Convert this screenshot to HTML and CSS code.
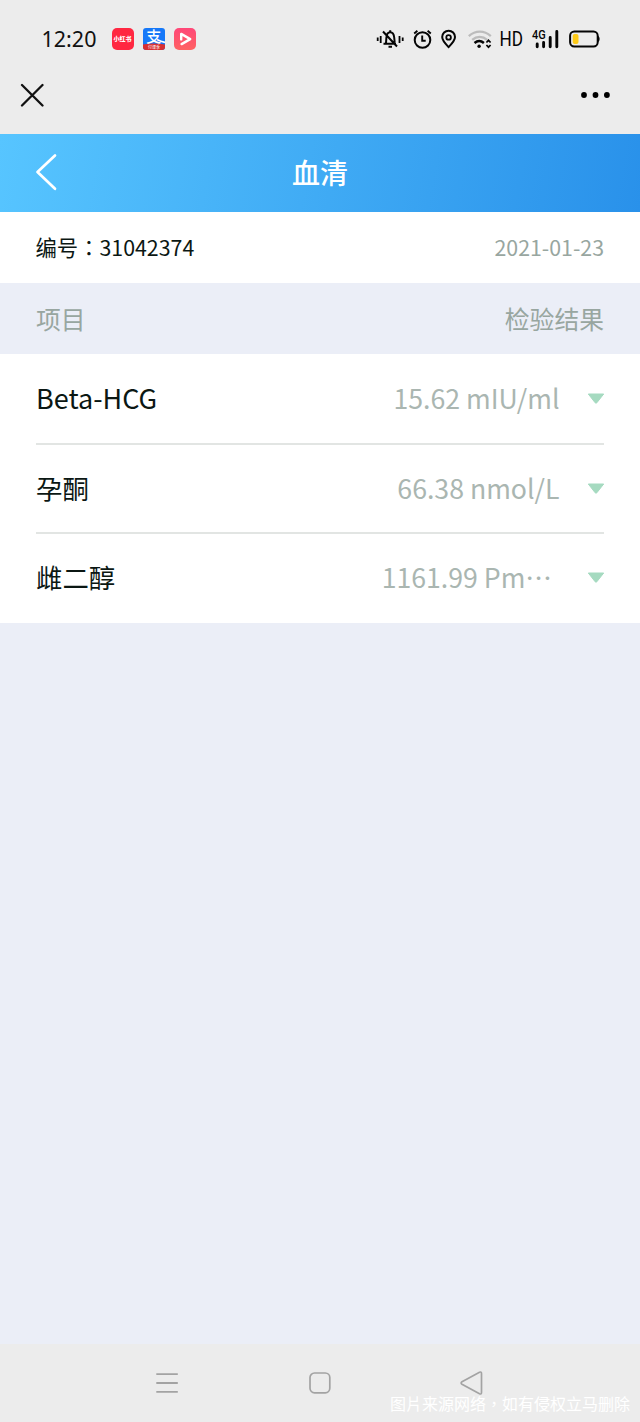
FILE: index.html
```
<!DOCTYPE html>
<html lang="zh-CN">
<head>
<meta charset="utf-8">
<title>血清</title>
<link rel="stylesheet" href="styles.css">
</head>
<body>
<div class="screen">
  <div class="status">
    <span class="clock">12:20</span>
    <div class="apps">
      <span class="app red"><span class="red-label">小红书</span></span>
      <span class="app pay"><svg width="22" height="22" viewBox="0 0 22 22"><path d="M14 11.5q4 2 8 3" stroke="#fff" stroke-width="1.8"/><path d="M0 16.5q11-2 22 0V22H0z" fill="#d82f32"/><text class="pay-label" x="10.8" y="14.4" text-anchor="middle">支</text><text class="pay-strip" x="11" y="20.8" text-anchor="middle">付课季</text></svg></span>
      <span class="app pink"><svg width="22" height="22" viewBox="0 0 22 22"><path d="M7.2 11.4V5.9l9 5.2-8.6 5" fill="none" stroke="#fff" stroke-width="2.4" stroke-linejoin="round" stroke-linecap="round"/></svg></span>
    </div>
    <svg class="signals" width="226" height="26" viewBox="376 26 226 26" fill="none" stroke="#050505">
      <path d="M377.7 37.5v3.5M380.7 36v7M399.5 36v7M402.7 37.5v3.5" stroke-width="1.8"/>
      <path d="M383.5 43.8h12.5M386 42.8l.4-5.3c.3-3.3 2-5.2 3.8-5.2s3.7 1.9 4 5.2l.5 5M383 31.5l14 15" stroke-width="2"/>
      <path d="M388.5 46.7h3.5M390.2 30.3v2" stroke-width="2"/>
      <circle cx="422.5" cy="40" r="7.8" stroke-width="2"/>
      <path d="M422.2 35.5v5.2h3.5M414.2 33.4l3.2-2.6M430.8 33.4l-3.2-2.6" stroke-width="1.9"/>
      <path d="M448.6 47.1c-3.4-3.4-6.4-6.3-6.4-10a6.4 6.4 0 0 1 12.8 0c0 3.7-3 6.6-6.4 10z" stroke-width="2"/>
      <circle cx="448.6" cy="37.4" r="2.3" stroke-width="1.8"/>
      <path d="M468.8 36.1c6.6-6 15.5-6 22 0M472.2 39.8c4.5-4 10.5-4 15 0" stroke="#bcbcbc" stroke-width="2.3"/>
      <path d="M474.5 42.9c3-2.4 6.4-2.4 9.4 0" stroke-width="2.6"/>
      <circle cx="479.1" cy="46.3" r="1.7" fill="#050505" stroke="none"/>
      <path d="M486.4 42.5l2.1-2.2 2.1 2.2M486.4 45l2.1 2.2 2.1-2.2" stroke-width="1.7"/>
      <text class="hd" x="499.4" y="46" textLength="23.5" lengthAdjust="spacingAndGlyphs">HD</text>
      <text class="net" x="532" y="38.8" textLength="13.7" lengthAdjust="spacingAndGlyphs">4G</text>
      <path d="M537.2 44v2.8M543.6 42.5v4.3M550.2 37.4v9.4M556.8 31.5v15.3" stroke-width="2.9" stroke-linecap="round"/>
      <rect x="570.1" y="31.6" width="27.6" height="14.8" rx="4.2" stroke-width="2"/>
      <path d="M598 36.3c1.5 1 1.5 4.3 0 5.3z" fill="#050505" stroke-width="1"/>
      <rect x="572.7" y="34" width="5.8" height="10" rx="2" fill="#fdca16" stroke="none"/>
    </svg>
  </div>
  <div class="browser">
    <svg width="24" height="24" viewBox="0 0 24 24"><path d="M2 2l20.5 20.5M22.5 2L2 22.5" stroke="#111" stroke-width="2.3" stroke-linecap="round"/></svg>
    <svg width="30" height="8" viewBox="0 0 30 8"><circle cx="3" cy="4" r="2.9"/><circle cx="14.5" cy="4" r="2.9"/><circle cx="25.9" cy="4" r="2.9"/></svg>
  </div>
  <header class="title-bar">
    <svg class="back" width="24" height="38" viewBox="0 0 24 38"><path d="M20 2.5L2.5 19 20 35.7" fill="none" stroke="#fff" stroke-width="2.7" stroke-linecap="round" stroke-linejoin="round"/></svg>
    <h1 class="title">血清</h1>
  </header>
  <div class="info"><span class="number">编号<span class="colon" lang="zh-TW">：</span>31042374</span><span class="muted">2021-01-23</span></div>
  <div class="head"><span>项目</span><span>检验结果</span></div>
  <div class="list">
    <div class="row"><span class="latin">Beta-HCG</span><span class="value">15.62 mIU/ml</span><svg class="arrow" width="18" height="12" viewBox="0 0 18 12"><path d="M1.3 1h15.4L9.8 9.8q-.8.9-1.6 0z" fill="#a5dac0" stroke="#a5dac0" stroke-linejoin="round"/></svg></div>
    <div class="row"><span>孕酮</span><span class="value">66.38 nmol/L</span><svg class="arrow" width="18" height="12" viewBox="0 0 18 12"><path d="M1.3 1h15.4L9.8 9.8q-.8.9-1.6 0z" fill="#a5dac0" stroke="#a5dac0" stroke-linejoin="round"/></svg></div>
    <div class="row"><span>雌二醇</span><span class="value cut">1161.99 Pm⋯</span><svg class="arrow" width="18" height="12" viewBox="0 0 18 12"><path d="M1.3 1h15.4L9.8 9.8q-.8.9-1.6 0z" fill="#a5dac0" stroke="#a5dac0" stroke-linejoin="round"/></svg></div>
  </div>
  <footer class="system">
    <svg width="24" height="24" viewBox="0 0 24 24"><path d="M1.3 3.2h21.5M1.3 12h21.5M1.3 20.9h21.5" stroke="#a3a3a3" stroke-width="1.8"/></svg>
    <svg width="24" height="24" viewBox="0 0 24 24"><rect x="2" y="2" width="19.8" height="19.8" rx="4.5" fill="none" stroke="#a3a3a3" stroke-width="1.7"/></svg>
    <svg width="24" height="26" viewBox="0 0 24 26"><path d="M2 11.7L19.5 2.2q2-.8 2 1.3v19q0 2.1-2 1.3L2 14.3q-1.8-1.3 0-2.6z" fill="none" stroke="#a3a3a3" stroke-width="1.7"/></svg>
    <span class="watermark" lang="zh-TW">图片来源网络，如有侵权立马删除</span>
  </footer>
</div>
</body>
</html>
```
FILE: styles.css
```
* { box-sizing: border-box; }
body {
  margin: 0;
  font-family: "Noto Sans CJK SC", sans-serif;
  color: #0b1713;
}
svg { display: block; flex: none; }
.screen {
  width: 640px;
  height: 1422px;
  display: flex;
  flex-direction: column;
  background: #ebeef7;
  overflow: hidden;
}
.status {
  height: 78px;
  display: flex;
  align-items: center;
  padding: 0 38px 0 41.5px;
  background: #ececec;
}
.clock {
  width: 70px;
  font: 21.5px/30px "Noto Sans", sans-serif;
  color: #111;
}
.apps { display: flex; gap: 9px; }
.app {
  width: 22px;
  height: 22px;
  border-radius: 5px;
  overflow: hidden;
  display: flex;
  align-items: center;
  justify-content: center;
  color: #fff;
}
.red { background: #ff2741; }
.red-label { font-size: 6px; font-weight: 900; line-height: 8px; white-space: nowrap; }
.pay { border-radius: 3px; background: #1678f8; }
.pay-label { font-size: 15px; font-weight: 500; fill: #fff; }
.pay-strip { font-size: 4px; fill: #fff; }
.pink { background: linear-gradient(#ff4778, #ff6262); }
.signals { margin-left: auto; }
.hd { font: 21px Roboto, sans-serif; fill: #050505; stroke: none; }
.net { font: 500 12px Roboto, sans-serif; fill: #050505; stroke: none; }
.browser {
  height: 56px;
  display: flex;
  align-items: flex-start;
  justify-content: space-between;
  padding: 5px 29px 0 20px;
  background: #ececec;
}
.browser svg:last-child { margin-top: 8px; }
.title-bar {
  height: 78px;
  display: grid;
  grid-template-columns: 100px 1fr 100px;
  align-items: center;
  padding-bottom: 3px;
  background: linear-gradient(100deg, #57c5ff, #2991ea);
}
.back { margin-left: 35px; }
.title {
  margin: 0;
  text-align: center;
  font-size: 28px;
  font-weight: 500;
  line-height: 40px;
  color: #fff;
}
.info, .head {
  height: 71px;
  display: flex;
  align-items: center;
  justify-content: space-between;
  padding: 0 36px 2px;
}
.info { background: #fff; font-size: 21.33px; }
.number { margin-left: -.5px; }
.colon { font-family: "Noto Sans CJK TC", sans-serif; }
.muted { color: #98a6a0; }
.head { font-size: 24.8px; color: #98a6a0; }
.list { background: #fff; padding: 0 36px; height: 269px; }
.row {
  height: 89px;
  display: flex;
  align-items: center;
  font-size: 26.4px;
  border-bottom: 2px solid #e2e5e3;
}
.row > span { padding-bottom: 2px; }
.row:first-child { height: 91px; }
.row:last-child { height: 88px; border: 0; }
.row:last-child > span { padding-bottom: 3px; }
.latin { font-size: 27px; }
.value { margin-left: auto; margin-right: 27.5px; color: #aab6b1; font-size: 26.67px; }
.value.cut { margin-right: 35px; }
.arrow { margin-right: -1px; }
.system {
  position: relative;
  height: 78px;
  margin-top: auto;
  display: flex;
  align-items: center;
  justify-content: space-between;
  padding: 0 156px 0 155px;
  background: #ececec;
}
.watermark {
  position: absolute;
  right: 10px;
  bottom: 7px;
  font: 16px/24px "Noto Sans CJK TC", sans-serif;
  color: #fff;
  white-space: nowrap;
}
```
